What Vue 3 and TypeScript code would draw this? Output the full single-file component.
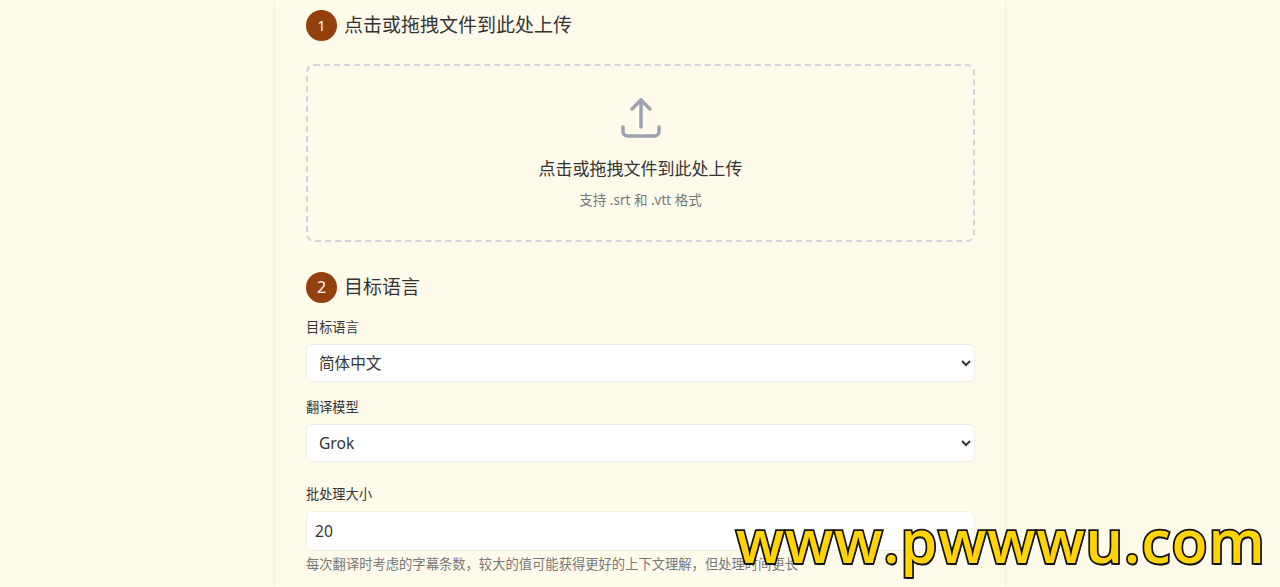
<template>
  <div class="page">
    <main class="card">
      <section class="step upload-step">
        <h2 class="step-title">
          <span class="step-num step-num-small">1</span>
          点击或拖拽文件到此处上传
        </h2>
        <div class="dropzone">
          <svg class="upload-icon" viewBox="0 0 24 24" fill="none" stroke="currentColor" stroke-width="1.75" stroke-linecap="round" stroke-linejoin="round">
            <path d="M3 16.5v2.25A2.25 2.25 0 0 0 5.25 21h13.5A2.25 2.25 0 0 0 21 18.75V16.5" />
            <path d="M7.5 7.5L12 3l4.5 4.5" />
            <path d="M12 3v13.5" />
          </svg>
          <p class="drop-text">点击或拖拽文件到此处上传</p>
          <p class="drop-hint">支持 .srt 和 .vtt 格式</p>
        </div>
      </section>

      <section class="step">
        <h2 class="step-title">
          <span class="step-num">2</span>
          目标语言
        </h2>
        <div class="field field-first">
          <label class="field-label">目标语言</label>
          <select v-model="language" class="control">
            <option v-for="item in languages" :key="item" :value="item">{{ item }}</option>
          </select>
        </div>
        <div class="field">
          <label class="field-label">翻译模型</label>
          <select v-model="model" class="control">
            <option v-for="item in models" :key="item" :value="item">{{ item }}</option>
          </select>
        </div>
        <div class="field field-batch">
          <label class="field-label">批处理大小</label>
          <input v-model="batchSize" class="control control-input" type="number" />
          <p class="field-hint">每次翻译时考虑的字幕条数，较大的值可能获得更好的上下文理解，但处理时间更长</p>
        </div>
      </section>
    </main>
    <div class="watermark">www.pwwwu.com</div>
  </div>
</template>

<script setup lang="ts">
import { ref } from 'vue'

const languages = ['简体中文', '繁體中文', 'English', '日本語']
const models = ['Grok', 'GPT-4o', 'Claude']

const language = ref('简体中文')
const model = ref('Grok')
const batchSize = ref(20)
</script>

<style>
html,
body {
  margin: 0;
  height: 100%;
  overflow: hidden;
  background: #fffbeb;
}
</style>

<style scoped>
.page {
  position: relative;
  height: 587px;
  overflow: hidden;
  background: #fffbeb;
  font-family: "Noto Sans", "Noto Sans CJK SC", sans-serif;
  color: #333;
}

.card {
  box-sizing: border-box;
  width: 732px;
  height: 587px;
  margin: 0 auto;
  padding: 10px 30px 0 31px;
  border: solid #f5f0e0;
  border-width: 0 1px;
  background: #fffbeb;
  box-shadow: 0 0 3px rgba(0, 0, 0, 0.03);
}

.step-title {
  display: flex;
  align-items: center;
  gap: 7px;
  margin: 0;
  height: 31px;
  font-size: 19px;
  font-weight: 400;
  line-height: 31px;
  color: #333;
}

.step-num {
  display: flex;
  align-items: center;
  justify-content: center;
  flex: none;
  width: 31px;
  height: 31px;
  border-radius: 50%;
  background: #92400e;
  color: #fff;
  font-size: 16px;
}

.step-num-small {
  font-size: 14px;
}

.dropzone {
  box-sizing: border-box;
  display: flex;
  flex-direction: column;
  align-items: center;
  height: 178px;
  margin-top: 23px;
  border: 2px dashed #d1d5db;
  border-radius: 8px;
  padding-top: 28px;
}

.upload-icon {
  flex: none;
  width: 48px;
  height: 48px;
  color: #9ca3af;
}

.drop-text {
  margin: 15px 0 0;
  font-size: 17px;
  line-height: 24px;
  color: #333;
}

.drop-hint {
  margin: 11px 0 0;
  font-size: 13.5px;
  line-height: 16px;
  color: #777;
}

.upload-step {
  margin-bottom: 30px;
}

.field {
  margin-top: 16px;
}

.field-first {
  margin-top: 15px;
}

.field-batch {
  margin-top: 23px;
}

.field-label {
  display: block;
  font-size: 13.2px;
  line-height: 18px;
  margin-bottom: 8px;
  color: #333;
}

.control {
  display: block;
  box-sizing: border-box;
  width: 100%;
  height: 38px;
  padding: 0 8px;
  border: 1px solid #f0ede4;
  border-radius: 6px;
  background: #fff;
  font: inherit;
  font-size: 15.6px;
  color: #333;
  outline: none;
}

.control-input {
  height: 40px;
}

.field-hint {
  margin: 5px 0 0;
  font-size: 13.3px;
  line-height: 16px;
  color: #777;
}

.watermark {
  position: absolute;
  left: 736px;
  top: 501px;
  font-family: "Open Sans", sans-serif;
  font-size: 59px;
  line-height: 78px;
  letter-spacing: 1px;
  font-weight: 600;
  color: #ffd400;
  -webkit-text-stroke: 3.5px #111;
  paint-order: stroke fill;
  text-shadow: 1px 2px 0 #111;
  white-space: nowrap;
}
</style>
